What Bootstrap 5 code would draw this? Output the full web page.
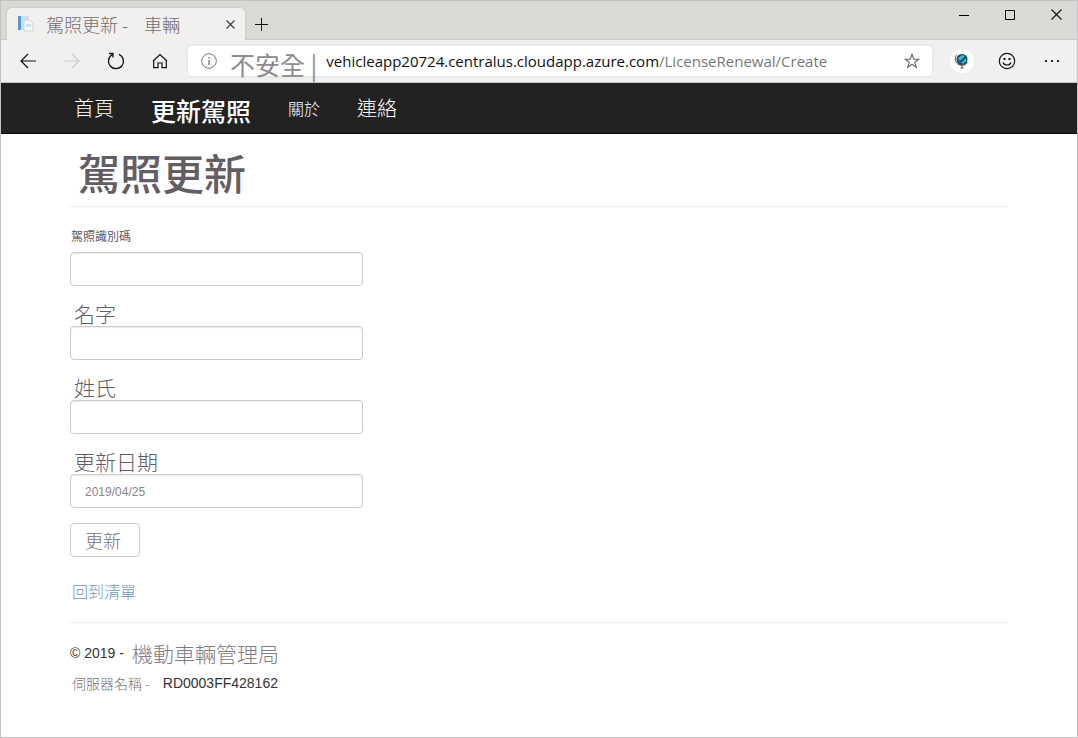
<!DOCTYPE html>
<html lang="zh-Hant">
<head>
<meta charset="utf-8">
<meta name="viewport" content="width=device-width, initial-scale=1">
<title>駕照更新 - 車輛</title>
<link href="https://cdn.jsdelivr.net/npm/bootstrap@5.3.0/dist/css/bootstrap.min.css" rel="stylesheet">
<style>
  body { font-family: "Liberation Sans", "Noto Sans CJK TC", sans-serif; font-size: 14px; line-height: 20px; color: #333; font-weight: 400; background: #fff; }
  .zh { font-family: "Noto Sans CJK TC", sans-serif; font-weight: 300; }
  .window-frame { border: 1px solid #c2c2c2; }
  .icon-btn { border: 0; background: none; padding: 0; display: inline-flex; align-items: center; justify-content: center; color: #111; flex: none; }

  /* browser chrome */
  .tab-strip { background: #dad9d5; height: 39px; box-shadow: inset 0 -1px #cbcac7; }
  .page-tab { background: #f1f0ee; width: 238px; height: 32px; margin: 7px 0 0 6px; padding: 0 10px 0 11px; border-radius: 5px 5px 0 0; box-shadow: 0 0 2px #b5b4b1; clip-path: inset(-3px -3px 0 -3px); font-size: 18px; color: #736a75; }
  .win-btns { margin-right: -2px; }
  .win-btn { width: 46px; height: 27px; }
  .tool-bar { background: #f1f0ee; height: 43px; border-bottom: 1px solid #c4c6c4; padding: 0 3px 0 5px; }
  .tool-btn { width: 44px; height: 40px; }
  .address { height: 30px; background: #fff; border-radius: 4px; box-shadow: 0 0 4px #dddcda; margin: 0 8px 0 6px; padding: 0 12px 0 13px; }
  .unsafe { font-size: 25px; line-height: 30px; color: #8e8b91; padding-top: 5px; margin-left: 13px; font-weight: 400; }
  .url { font: 15px/30px "Open Sans", sans-serif; color: #777; margin-left: 9px; }
  .url b { color: #111; font-weight: 400; }
  .globe { width: 24px; height: 24px; border-radius: 50%; background: #fff; }

  /* site */
  .site { max-width: 968px; padding: 0 15px; margin: 0 auto; }
  .site-nav { background: #222; height: 51px; border-bottom: 1px solid #080808; }
  .site-nav a { color: #fff; text-decoration: none; line-height: 46px; }
  .nav-row { column-gap: 37px; }
  .nav-sm { font-size: 16px; }
  .nav-md { font-size: 20px; }
  .nav-lg { font-size: 25px; }
  .page-title { font-size: 42px; line-height: 60px; padding: 8px 0 4px 8px; margin: 0; color: #635e63; }
  .zh-medium { font-family: "Noto Sans CJK TC Medium", "Noto Sans CJK TC", sans-serif; font-weight: 500; }
  .rule { border: 0; border-top: 1px solid #eee; opacity: 1; margin: 0; }
  .field { margin-bottom: 15px; width: 293px; }
  .field label { display: block; height: 25px; line-height: 24px; font-size: 21px; color: #635b66; padding-left: 4px; }
  .field .label-sm { font-size: 12px; line-height: 18px; padding-left: 1px; font-weight: 400; }
  .field input { height: 34px; border: 1px solid #ccc; border-radius: 4px; padding: 2px 14px 0; font-size: 12px; color: #8a858c; box-shadow: inset 0 1px 1px rgba(0,0,0,.08); }
  .renew { width: 70px; height: 34px; padding: 0 4px 0 0; border: 1px solid #ccc; border-radius: 4px; background: #fff; font-size: 18px; line-height: 32px; color: #777278; }
  .back-row { margin: 22px 0 19px; }
  .back { font-size: 16px; color: #6b96c8; text-decoration: none; padding-left: 2px; line-height: 24px; }
  .footer-block { margin-top: 18px; }
  .org { font-size: 21px; color: #817c84; line-height: 24px; }
  .server-row { margin-top: 8px; padding-left: 2px; column-gap: 13px; }
  .srv { font-size: 14px; color: #78737a; }
</style>
</head>
<body>
<div class="window-frame min-vh-100">
  <header>
    <div class="tab-strip d-flex">
      <div class="page-tab zh d-flex align-items-center">
        <svg width="16" height="16" viewBox="0 0 16 16" class="flex-shrink-0">
          <path d="M0 0h3v14H0z" fill="#4b9fd6"/><path d="M3 0h8v14H3z" fill="#d3dde8"/>
          <path d="M6 4h6l3 3v8H6z" fill="#f3f5f9" stroke="#ccd5e2"/><path d="M8 8h5v3H8z" fill="#d5dde8"/>
        </svg>
        <span class="ms-2 ps-1">駕照更新 -</span><span class="ms-3">車輛</span>
        <button class="icon-btn ms-auto" aria-label="關閉分頁"><svg width="9" height="9" viewBox="0 0 9 9"><path d="M.5.5l8 8M8.500.500l-8 8" stroke="#444" stroke-width="1.300"/></svg></button>
      </div>
      <button class="icon-btn ms-2 mt-2" aria-label="新分頁"><svg width="17" height="17" viewBox="0 0 17 17"><path d="M2 8.500h13M8.500 2v13" stroke="#111"/></svg></button>
      <div class="win-btns ms-auto d-flex">
        <button class="icon-btn win-btn" aria-label="最小化"><svg width="10" height="10"><path d="M0 5.500h10" stroke="#000"/></svg></button>
        <button class="icon-btn win-btn" aria-label="最大化"><svg width="10" height="10"><path d="M.5.5h9v9h-9z" fill="none" stroke="#000"/></svg></button>
        <button class="icon-btn win-btn" aria-label="關閉"><svg width="11" height="11"><path d="M.5.5l10 10M10.500.500l-10 10" stroke="#111" stroke-width="1.100"/></svg></button>
      </div>
    </div>
    <div class="tool-bar d-flex align-items-center">
      <button class="icon-btn tool-btn" aria-label="上一頁"><svg width="16" height="16" viewBox="0 0 16 16" fill="none" stroke="#111" stroke-width="1.200"><path d="M16 8H1M8 1L1 8l7 7"/></svg></button>
      <button class="icon-btn tool-btn" aria-label="下一頁" disabled><svg width="16" height="16" viewBox="0 0 16 16" fill="none" stroke="#ccc" stroke-width="1.200"><path d="M0 8h15M8 1l7 7-7 7"/></svg></button>
      <button class="icon-btn tool-btn" aria-label="重新整理"><svg width="18" height="18" viewBox="0 0 18 18" fill="none" stroke="#111" stroke-width="1.300"><path d="M12 2.300a7.500 7.500 0 1 1-6.500.2M2 1.500h4v4"/></svg></button>
      <button class="icon-btn tool-btn" aria-label="首頁"><svg width="16" height="16" viewBox="0 0 16 16" fill="none" stroke="#111" stroke-width="1.200"><path d="M1 8l7-6.500L15 8M1.700 7.300v7.400h4.300v-4.700h4v4.700h4.300V7.300"/></svg></button>
      <div class="address d-flex align-items-center flex-grow-1">
        <svg width="16" height="16" viewBox="0 0 16 16" class="flex-shrink-0"><circle cx="8" cy="8" r="7.300" fill="none" stroke="#777"/><path d="M8 7v5M8 4v1.500" stroke="#666" stroke-width="1.200"/></svg>
        <span class="unsafe zh text-nowrap">不安全 |</span>
        <span class="url text-nowrap"><b>vehicleapp20724.centralus.cloudapp.azure.com</b>/LicenseRenewal/Create</span>
        <button class="icon-btn ms-auto" aria-label="加到我的最愛"><svg width="16" height="16" viewBox="0 0 16 16"><path d="M8 1.200l1.700 5h5.200l-4.200 3.100 1.600 5.100L8 11.300l-4.300 3.100 1.600-5.100L1.100 6.200h5.200z" fill="none" stroke="#666" stroke-width="1.100"/></svg></button>
      </div>
      <button class="icon-btn tool-btn" aria-label="擴充功能"><span class="globe d-flex align-items-center justify-content-center"><svg width="16" height="16" viewBox="0 0 16 16"><circle cx="8" cy="6.500" r="5.500" fill="#0b4453"/><path d="M4 5l4-3 3 1-6 6zM7 10l5-5 .5 3L9 11z" fill="#31bfd6"/><path d="M3.500 6l3 4" stroke="#1b65c4" stroke-width="2"/><path d="M3 1.500C0 5 1 10 5 11.700c3 1.300 7 .3 8.500-2.200M8 12v3M6.500 15h3" fill="none" stroke="#555"/></svg></span></button>
      <button class="icon-btn win-btn" aria-label="意見反應"><svg width="18" height="18" viewBox="0 0 18 18" fill="none" stroke="#111" stroke-width="1.200"><circle cx="9" cy="9" r="7.700"/><path d="M5 10.500c1.200 3.300 6.800 3.300 8 0"/><path d="M5.500 7h2M10.500 7h2" stroke-width="2"/></svg></button>
      <button class="icon-btn tool-btn" aria-label="更多"><svg width="14" height="2"><path d="M0 1h2M6 1h2M12 1h2" stroke="#222" stroke-width="2"/></svg></button>
    </div>
  </header>

  <nav class="site-nav">
    <div class="site nav-row zh d-flex align-items-center">
      <a class="nav-md ms-1" href="#">首頁</a>
      <a class="nav-lg zh-medium pt-1" href="#">更新駕照</a>
      <a class="nav-sm" href="#">關於</a>
      <a class="nav-md" href="#">連絡</a>
    </div>
  </nav>

  <main class="site">
    <h1 class="page-title zh-medium">駕照更新</h1>
    <hr class="rule">
    <form class="mt-3 pt-1">
      <div class="field"><label class="zh label-sm" for="lic">駕照識別碼</label><input class="form-control" id="lic" type="text"></div>
      <div class="field"><label class="zh" for="first">名字</label><input class="form-control" id="first" type="text"></div>
      <div class="field"><label class="zh" for="last">姓氏</label><input class="form-control" id="last" type="text"></div>
      <div class="field"><label class="zh" for="date">更新日期</label><input class="form-control" id="date" type="text" value="2019/04/25"></div>
      <button class="renew zh" type="button">更新</button>
    </form>
    <div class="back-row"><a class="back zh" href="#">回到清單</a></div>
    <hr class="rule">
    <footer class="footer-block">
      <div class="d-flex align-items-center">© 2019 -<span class="org zh ms-2">機動車輛管理局</span></div>
      <div class="server-row d-flex align-items-center"><span class="srv zh">伺服器名稱 -</span><span>RD0003FF428162</span></div>
    </footer>
  </main>
</div>
<script src="https://cdn.jsdelivr.net/npm/bootstrap@5.3.0/dist/js/bootstrap.bundle.min.js"></script>
</body>
</html>
